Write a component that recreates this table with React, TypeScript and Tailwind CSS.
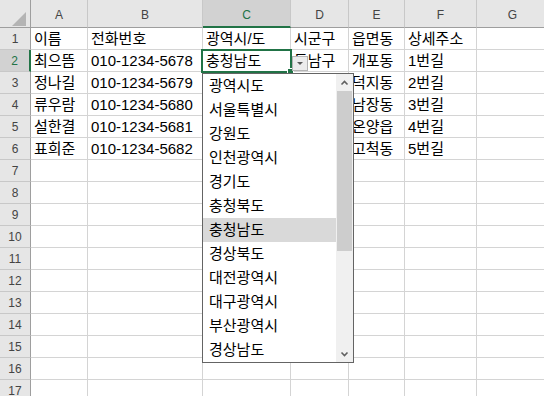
import React from "react";

const columns = [
  { name: "A", width: "w-[57px]" },
  { name: "B", width: "w-[115px]" },
  { name: "C", width: "w-[88px]" },
  { name: "D", width: "w-[58px]" },
  { name: "E", width: "w-[56px]" },
  { name: "F", width: "w-[72px]" },
  { name: "G", width: "w-[72px]" },
];

// C3:D6 sit under the open list, so they are left blank here
const data: string[][] = [
  ["이름", "전화번호", "광역시/도", "시군구", "읍면동", "상세주소", ""],
  ["최으뜸", "010-1234-5678", "충청남도", "동남구", "개포동", "1번길", ""],
  ["정나길", "010-1234-5679", "", "", "덕지동", "2번길", ""],
  ["류우람", "010-1234-5680", "", "", "남장동", "3번길", ""],
  ["설한결", "010-1234-5681", "", "", "온양읍", "4번길", ""],
  ["표희준", "010-1234-5682", "", "", "고척동", "5번길", ""],
];

const regions = [
  "광역시도",
  "서울특별시",
  "강원도",
  "인천광역시",
  "경기도",
  "충청북도",
  "충청남도",
  "경상북도",
  "대전광역시",
  "대구광역시",
  "부산광역시",
  "경상남도",
];

const ROW_COUNT = 17;
const activeCol = 2;
const activeRow = 2;

function RegionDropdown({ value }: { value: string }) {
  return (
    <div className="absolute left-[202px] top-[73px] w-[152px] h-[290px] border border-[#646464] bg-white flex">
      <div className="flex-1 flex flex-col">
        {regions.map((r) => (
          <div
            key={r}
            className={`h-[24px] pl-[6px] leading-[24px] text-[15px] text-black whitespace-nowrap ${
              r === value ? "bg-[#d9d9d9]" : ""
            }`}
          >
            {r}
          </div>
        ))}
      </div>
      {/* scrollbar */}
      <div className="w-[17px] bg-[#f0f0f0] flex flex-col">
        <svg width="17" height="17" viewBox="0 0 17 17">
          <polyline points="5.5,10.5 8.5,7.5 11.5,10.5" fill="none" stroke="#606060" strokeWidth="1.6" />
        </svg>
        <div className="h-[160px] mx-[1px] bg-[#cdcdcd]" />
        <div className="flex-1" />
        <svg width="17" height="17" viewBox="0 0 17 17">
          <polyline points="5.5,7.5 8.5,10.5 11.5,7.5" fill="none" stroke="#606060" strokeWidth="1.6" />
        </svg>
      </div>
    </div>
  );
}

export default function App() {
  return (
    <div className="relative w-[544px] h-[396px] overflow-hidden bg-white font-['Liberation_Sans','Noto_Sans_CJK_KR',sans-serif]">
      {/* column headers */}
      <div className="flex">
        <div className="w-[31px] h-[28px] shrink-0 border-r border-b border-[#9e9e9e] bg-[#e6e6e6]">
          <svg width="30" height="27" viewBox="0 0 30 27">
            <polygon points="26,12 26,26 12,26" fill="#b4b4b4" />
          </svg>
        </div>
        {columns.map((c, i) => (
          <div
            key={c.name}
            className={`${c.width} h-[28px] shrink-0 flex items-center justify-center pt-[3px] text-[12px] border-r border-r-[#c8c8c8] ${
              i === activeCol
                ? "bg-[#d2d2d2] text-[#217346] border-b-2 border-b-[#217346]"
                : "bg-[#e6e6e6] text-[#444] border-b border-b-[#9e9e9e]"
            }`}
          >
            {c.name}
          </div>
        ))}
      </div>

      {/* rows */}
      {Array.from({ length: ROW_COUNT }, (_, r) => {
        const rowNum = r + 1;
        const cells = data[r] ?? [];
        return (
          <div key={rowNum} className="flex">
            <div
              className={`w-[31px] h-[22px] shrink-0 flex items-center justify-center pt-[1px] text-[12px] border-b border-b-[#c8c8c8] ${
                rowNum === activeRow
                  ? "bg-[#d2d2d2] text-[#217346] border-r-2 border-r-[#217346]"
                  : "bg-[#e6e6e6] text-[#444] border-r border-r-[#9e9e9e]"
              }`}
            >
              {rowNum}
            </div>
            {columns.map((c, i) => (
              <div
                key={c.name}
                className={`${c.width} h-[22px] shrink-0 border-r border-b border-[#d4d4d4] px-[3px] leading-[21px] text-[15px] text-black whitespace-nowrap overflow-hidden`}
              >
                {cells[i] ?? ""}
              </div>
            ))}
          </div>
        );
      })}

      {/* active cell C2 */}
      <div className="absolute left-[201px] top-[49px] w-[91px] h-[24px] border-2 border-[#217346]" />
      <div className="absolute left-[287px] top-[68px] w-[7px] h-[7px] bg-[#217346] border border-white" />

      {/* validation list button */}
      <div className="absolute left-[292px] top-[56px] w-[16px] h-[15px] border border-[#b4b4b4] bg-[#ececec]">
        <svg width="14" height="13" viewBox="0 0 14 13">
          <polygon points="4,5 10,5 7,8" fill="#5a5a5a" />
        </svg>
      </div>

      <RegionDropdown value="충청남도" />
    </div>
  );
}
